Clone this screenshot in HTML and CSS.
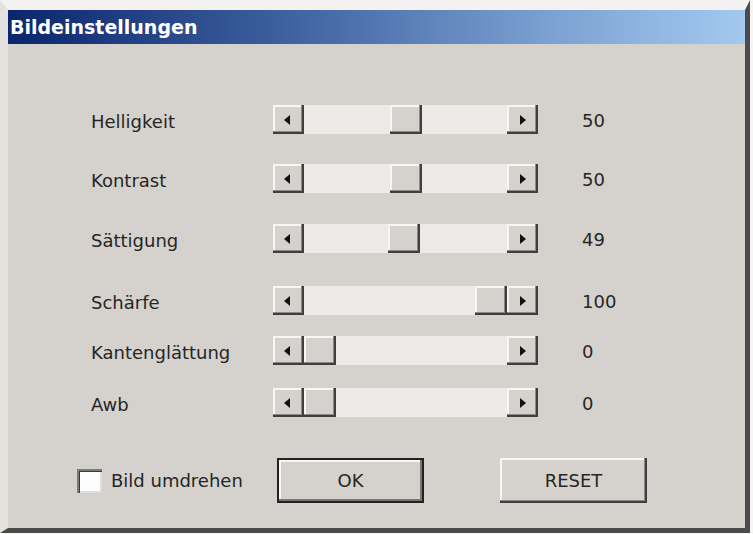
FILE: index.html
```html
<!DOCTYPE html>
<html lang="de">
<head>
    <meta charset="UTF-8">
    <title>Bildeinstellungen</title>
    <link rel="stylesheet" href="styles.css">
</head>
<body>
<div class="window">
    <div class="titlebar">Bildeinstellungen</div>
    <div class="content">
        <div class="sliders">
            <div class="row">
                <span class="label">Helligkeit</span>
                <div class="scrollbar">
                    <span class="btn"><i class="arrow left"></i></span>
                    <span class="track"><span class="thumb" style="--v: 0.5"></span></span>
                    <span class="btn"><i class="arrow right"></i></span>
                </div>
                <span class="value">50</span>
            </div>
            <div class="row">
                <span class="label">Kontrast</span>
                <div class="scrollbar">
                    <span class="btn"><i class="arrow left"></i></span>
                    <span class="track"><span class="thumb" style="--v: 0.5"></span></span>
                    <span class="btn"><i class="arrow right"></i></span>
                </div>
                <span class="value">50</span>
            </div>
            <div class="row">
                <span class="label">Sättigung</span>
                <div class="scrollbar">
                    <span class="btn"><i class="arrow left"></i></span>
                    <span class="track"><span class="thumb" style="--v: 0.49"></span></span>
                    <span class="btn"><i class="arrow right"></i></span>
                </div>
                <span class="value">49</span>
            </div>
            <div class="row">
                <span class="label">Schärfe</span>
                <div class="scrollbar">
                    <span class="btn"><i class="arrow left"></i></span>
                    <span class="track"><span class="thumb" style="--v: 1"></span></span>
                    <span class="btn"><i class="arrow right"></i></span>
                </div>
                <span class="value">100</span>
            </div>
            <div class="row">
                <span class="label">Kantenglättung</span>
                <div class="scrollbar">
                    <span class="btn"><i class="arrow left"></i></span>
                    <span class="track"><span class="thumb" style="--v: 0"></span></span>
                    <span class="btn"><i class="arrow right"></i></span>
                </div>
                <span class="value">0</span>
            </div>
            <div class="row">
                <span class="label">Awb</span>
                <div class="scrollbar">
                    <span class="btn"><i class="arrow left"></i></span>
                    <span class="track"><span class="thumb" style="--v: 0"></span></span>
                    <span class="btn"><i class="arrow right"></i></span>
                </div>
                <span class="value">0</span>
            </div>
        </div>

        <div class="footer">
            <label class="check">
                <span class="box"></span>
                Bild umdrehen
            </label>
            <button class="button default">OK</button>
            <button class="button">RESET</button>
        </div>
    </div>
</div>
</body>
</html>
```

FILE: styles.css
```css
* {
    box-sizing: border-box;
}

body {
    margin: 0;
    background: #f5f5f3;
    font-family: "DejaVu Sans", sans-serif;
    font-size: 18px;
    color: #262626;
}

.window {
    width: 750px;
    height: 533px;
    background: #d5d2cd;
    border-top: 10px solid #f3f2f0;
    border-left: 8px solid #e4e2de;
    border-right: 5px solid #4b4b4b;
    border-bottom: 5px solid #4b4b4b;
    display: flex;
    flex-direction: column;
}

.titlebar {
    height: 34px;
    padding-left: 2px;
    background: linear-gradient(to right, #0b266c 0%, #3a5c9c 35%, #7ea3d4 75%, #a3c9ef 100%);
    color: #fff;
    font-weight: bold;
    font-size: 19px;
    line-height: 34px;
}

.content {
    flex: 1;
    padding: 61px 0 0 83px;
}

.row {
    display: grid;
    grid-template-columns: 182px 265px auto;
    align-items: center;
    height: 29px;
}

.row:nth-child(2) { margin-top: 30px; }
.row:nth-child(3) { margin-top: 31px; }
.row:nth-child(4) { margin-top: 33px; }
.row:nth-child(5) { margin-top: 21px; }
.row:nth-child(6) { margin-top: 23px; }

.label {
    padding-top: 4px;
}

.value {
    padding-top: 2px;
    margin-left: 44px;
}

.scrollbar {
    display: flex;
    height: 29px;
}

.btn,
.thumb {
    width: 31px;
    height: 29px;
    flex: none;
    background: #d5d2cd;
    box-shadow: inset -2px -2px #3f3f3f, inset -3px -3px #8a8a8a, inset 2px 2px #f6f6f4;
}

.btn {
    display: flex;
    align-items: center;
    justify-content: center;
}

.track {
    flex: 1;
    display: flex;
    background: #ebeae7;
}

.thumb {
    width: 32px;
    margin-left: calc((100% - 32px) * var(--v));
}

.arrow {
    width: 0;
    height: 0;
    border-top: 5px solid transparent;
    border-bottom: 5px solid transparent;
}

.arrow.left {
    border-right: 6px solid #111;
    margin-right: 3px;
}

.arrow.right {
    border-left: 6px solid #111;
}

.footer {
    display: flex;
    align-items: center;
    margin-top: 41px;
    margin-left: -14px;
}

.check {
    display: flex;
    align-items: center;
    gap: 9px;
    width: 200px;
}

.box {
    width: 25px;
    height: 24px;
    background: #fdfdfd;
    box-shadow: inset 2px 2px #7a7a7a, inset 3px 3px #3c3c3c, inset -2px -2px #e0deda;
}

.button {
    width: 147px;
    height: 45px;
    font-family: "DejaVu Sans", sans-serif;
    font-size: 18px;
    color: #262626;
    background: #d5d2cd;
    border: none;
    box-shadow: inset -2px -2px #3f3f3f, inset -3px -3px #8a8a8a, inset 2px 2px #f6f6f4;
    padding: 0;
}

.button.default {
    margin-right: 76px;
    box-shadow: inset 0 0 0 2px #222, inset -4px -4px #777, inset 4px 4px #f6f6f4;
}
```
